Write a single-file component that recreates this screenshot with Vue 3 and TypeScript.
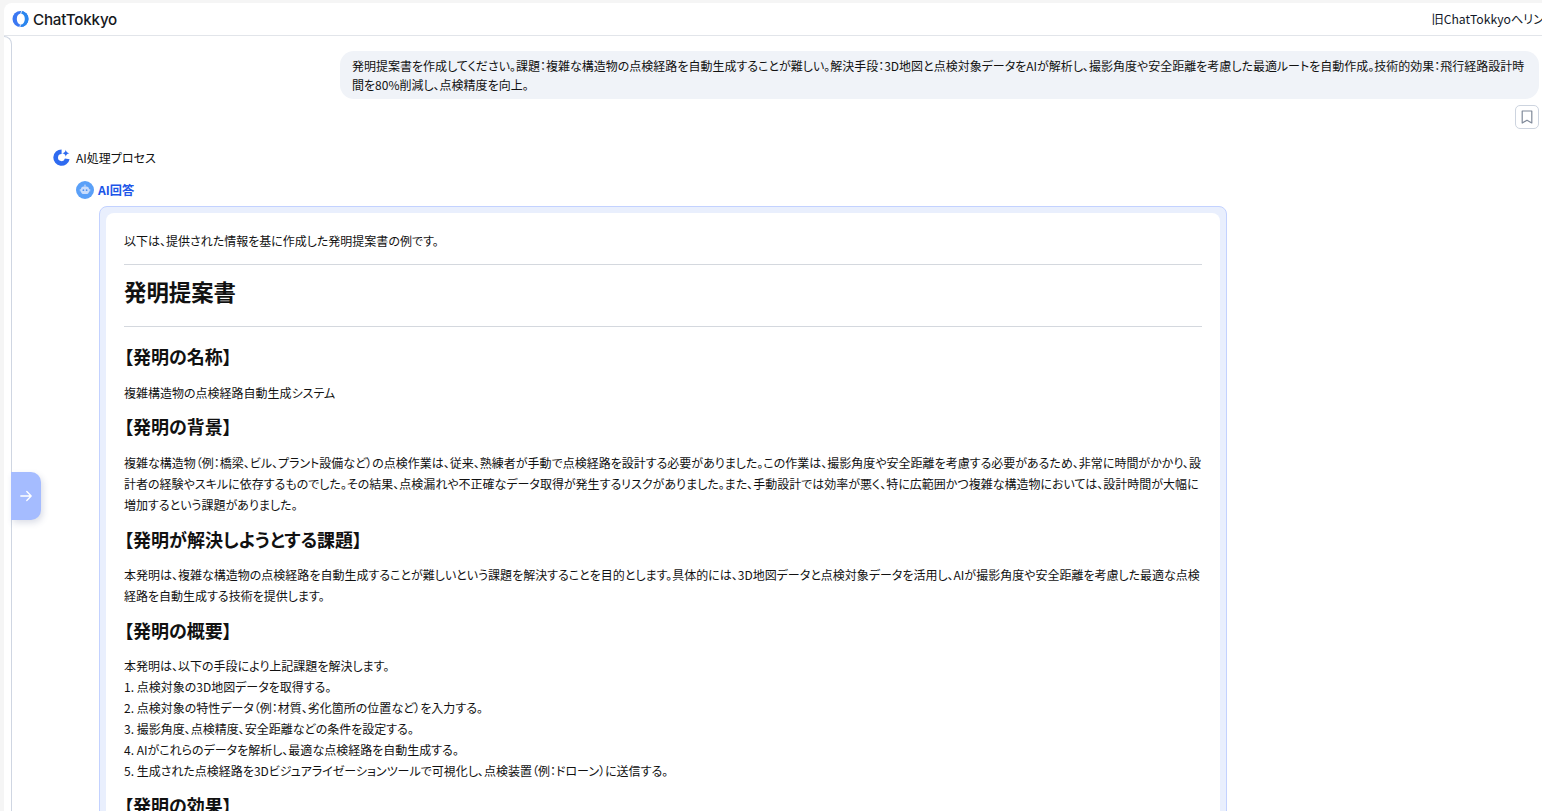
<script setup lang="ts">
const steps: string[] = [
  '本発明は、以下の手段により上記課題を解決します。',
  '1. 点検対象の3D地図データを取得する。',
  '2. 点検対象の特性データ（例：材質、劣化箇所の位置など）を入力する。',
  '3. 撮影角度、点検精度、安全距離などの条件を設定する。',
  '4. AIがこれらのデータを解析し、最適な点検経路を自動生成する。',
  '5. 生成された点検経路を3Dビジュアライゼーションツールで可視化し、点検装置（例：ドローン）に送信する。'
]
</script>

<template>
  <div class="app">
    <header class="header">
      <div class="brand">
        <svg class="logo" width="17" height="18" viewBox="0 0 17 18">
          <circle cx="8.500" cy="9" r="8" fill="#3b78f2" />
          <path d="M8.500 1 A8 8 0 0 1 8.500 17 Z" fill="#2a86ee" />
          <ellipse cx="8.800" cy="9" rx="4" ry="5.600" fill="#fff" />
          <path d="M9.800 .5 8.600 4M7.600 17.500 8.800 14" stroke="#d5e3fb" stroke-width="1" fill="none" />
        </svg>
        <span class="brand-name">ChatTokkyo</span>
      </div>
      <span class="old-link">旧ChatTokkyoへリンク</span>
    </header>
    <div class="body">
      <aside class="rail"></aside>
      <button class="toggle" aria-label="開く">
        <svg width="14" height="14" viewBox="0 0 14 14" fill="none" stroke="#fff" stroke-width="1.300" stroke-linecap="round" stroke-linejoin="round">
          <path d="M1.800 7h10.200M7.800 2.500 12.200 7l-4.400 4.500" />
        </svg>
      </button>
      <main class="chat">
        <div class="user-row">
          <div class="bubble">発明提案書を作成してください。課題：複雑な構造物の点検経路を自動生成することが難しい。解決手段：3D地図と点検対象データをAIが解析し、撮影角度や安全距離を考慮した最適ルートを自動作成。技術的効果：飛行経路設計時間を80%削減し、点検精度を向上。</div>
        </div>
        <div class="bookmark-row">
          <button class="bookmark" aria-label="ブックマーク">
            <svg width="12" height="14" viewBox="0 0 12 14" fill="none" stroke="#808a9a" stroke-width="1.200" stroke-linejoin="round">
              <path d="M1.200 1h9.600v12L6 10.200 1.200 13z" />
            </svg>
          </button>
        </div>
        <div class="process">
          <svg width="17" height="17" viewBox="0 0 17 17">
            <path d="M8.600 .4A8.200 8.200 0 1 0 16.600 10.200L11.900 9.500A3.500 3.500 0 1 1 8.600 5.100z" fill="#2f6bf0" />
            <path d="M12.800 .8c.3 2.100 1.100 2.900 3.500 3.500-2.400.6-3.200 1.400-3.500 3.500-.3-2.100-1.100-2.900-3.500-3.500 2.400-.6 3.200-1.400 3.500-3.500z" fill="#2f6bf0" />
          </svg>
          <span>AI処理プロセス</span>
        </div>
        <div class="answer-head">
          <span class="bot">
            <svg width="12" height="12" viewBox="0 0 12 12">
              <rect x="5.400" y=".6" width="1.200" height="2" fill="#c9dcfb" />
              <rect x=".8" y="5" width="1" height="2.600" rx=".5" fill="#c9dcfb" />
              <rect x="10.200" y="5" width="1" height="2.600" rx=".5" fill="#c9dcfb" />
              <rect x="2" y="2.400" width="8" height="7.600" rx="2.800" fill="#c9dcfb" />
              <circle cx="4.400" cy="6.200" r=".9" fill="#4f92f0" />
              <circle cx="7.600" cy="6.200" r=".9" fill="#4f92f0" />
            </svg>
          </span>
          <span class="answer-title">AI回答</span>
        </div>
        <section class="card">
          <article class="sheet">
            <p class="intro">以下は、提供された情報を基に作成した発明提案書の例です。</p>
            <hr />
            <h1>発明提案書</h1>
            <hr class="after-title" />
            <h2>【発明の名称】</h2>
            <p>複雑構造物の点検経路自動生成システム</p>
            <h2>【発明の背景】</h2>
            <p>複雑な構造物（例：橋梁、ビル、プラント設備など）の点検作業は、従来、熟練者が手動で点検経路を設計する必要がありました。この作業は、撮影角度や安全距離を考慮する必要があるため、非常に時間がかかり、設計者の経験やスキルに依存するものでした。その結果、点検漏れや不正確なデータ取得が発生するリスクがありました。また、手動設計では効率が悪く、特に広範囲かつ複雑な構造物においては、設計時間が大幅に増加するという課題がありました。</p>
            <h2>【発明が解決しようとする課題】</h2>
            <p>本発明は、複雑な構造物の点検経路を自動生成することが難しいという課題を解決することを目的とします。具体的には、3D地図データと点検対象データを活用し、AIが撮影角度や安全距離を考慮した最適な点検経路を自動生成する技術を提供します。</p>
            <h2>【発明の概要】</h2>
            <p>
              <template v-for="(s, i) in steps" :key="i">{{ s }}<br /></template>
            </p>
            <h2>【発明の効果】</h2>
          </article>
        </section>
      </main>
    </div>
  </div>
</template>

<style>
html, body { margin: 0; padding: 0; overflow: hidden; background: #fff; }
</style>

<style scoped>
.app {
  position: relative;
  width: 1542px;
  height: 811px;
  overflow: hidden;
  background: #f5f5f5;
  padding-top: 3px;
  padding-left: 4px;
  box-sizing: border-box;
  display: flex;
  flex-direction: column;
  font-family: "Noto Sans CJK JP", "Noto Sans", sans-serif;
  font-feature-settings: "palt";
  font-size: 12px;
  color: #111;
}
.header {
  height: 32px;
  flex: none;
  display: flex;
  align-items: center;
  justify-content: space-between;
  background: #fff;
  border-bottom: 1px solid #e2e5ea;
  border-top-left-radius: 8px;
  padding-left: 8px;
  white-space: nowrap;
  overflow: hidden;
}
.brand { display: flex; align-items: center; gap: 4px; }
.logo { display: block; }
.brand-name {
  font-family: Inter, "Noto Sans", sans-serif;
  font-size: 15.200px;
  font-weight: 500;
  color: #16181d;
  letter-spacing: -.2px;
}
.old-link { font-size: 12.200px; margin-right: -13px; color: #111827; }
.body { flex: 1; display: flex; min-height: 0; background: #fff; position: relative; }
.rail {
  width: 7px;
  flex: none;
  border-right: 1px solid #cfd6e2;
  border-top: 1px solid #cfd6e2;
  border-top-right-radius: 8px;
}
.toggle {
  position: absolute;
  left: 7px;
  top: 436px;
  width: 30px;
  height: 48px;
  padding: 0;
  border: 0;
  background: #a5bcff;
  border-radius: 0 10px 10px 0;
  box-shadow: 2px 3px 6px rgba(60, 80, 130, .18);
  display: flex;
  align-items: center;
  justify-content: center;
}
.chat { flex: 1; min-width: 0; display: flex; flex-direction: column; padding-top: 15px; }
.user-row { display: flex; justify-content: flex-end; padding-right: 3px; }
.bubble {
  width: 1199px;
  height: 48px;
  box-sizing: border-box;
  background: #f0f3f8;
  border-radius: 14px;
  padding: 5px 12px;
  line-height: 19.200px;
}
.bookmark-row { display: flex; justify-content: flex-end; padding: 6px 3px 0 0; }
.bookmark {
  width: 24px;
  height: 24px;
  padding: 0;
  background: #fff;
  border: 1px solid #cdd4df;
  border-radius: 5px;
  display: flex;
  align-items: center;
  justify-content: center;
}
.process {
  display: flex;
  align-items: center;
  gap: 6px;
  margin: 20px 0 0 41px;
  height: 18px;
}
.process svg { display: block; }
.answer-head { display: flex; align-items: center; gap: 4px; margin: 14px 0 0 64px; height: 18px; padding-top: 1px; }
.bot {
  width: 18px;
  height: 18px;
  border-radius: 50%;
  background: #5aa0f8;
  display: flex;
  align-items: center;
  justify-content: center;
}
.answer-title { color: #1d56e8; font-weight: 700; font-size: 12.200px; }
.card {
  width: 1128px;
  box-sizing: border-box;
  margin: 7px 0 0 87px;
  background: #e9effd;
  border: 1px solid #c3d2ff;
  border-radius: 8px;
  padding: 6px;
}
.sheet {
  background: #fff;
  border-radius: 8px;
  padding: 17px 18px 18px;
}
p { margin: 0; line-height: 21px; }
hr { border: 0; border-top: 1px solid #d4d8de; margin: 13px 0 0; }
h1 { font-size: 22.400px; font-weight: 700; line-height: 32px; margin: 10px 0 0; color: #111; }
hr.after-title { margin-top: 19px; }
h2 { font-size: 18px; font-weight: 700; line-height: 26px; margin: 10.800px 0 0; color: #111; }
h2 + p { margin-top: 12.500px; }
hr.after-title + h2 { margin-top: 16px; }
</style>
